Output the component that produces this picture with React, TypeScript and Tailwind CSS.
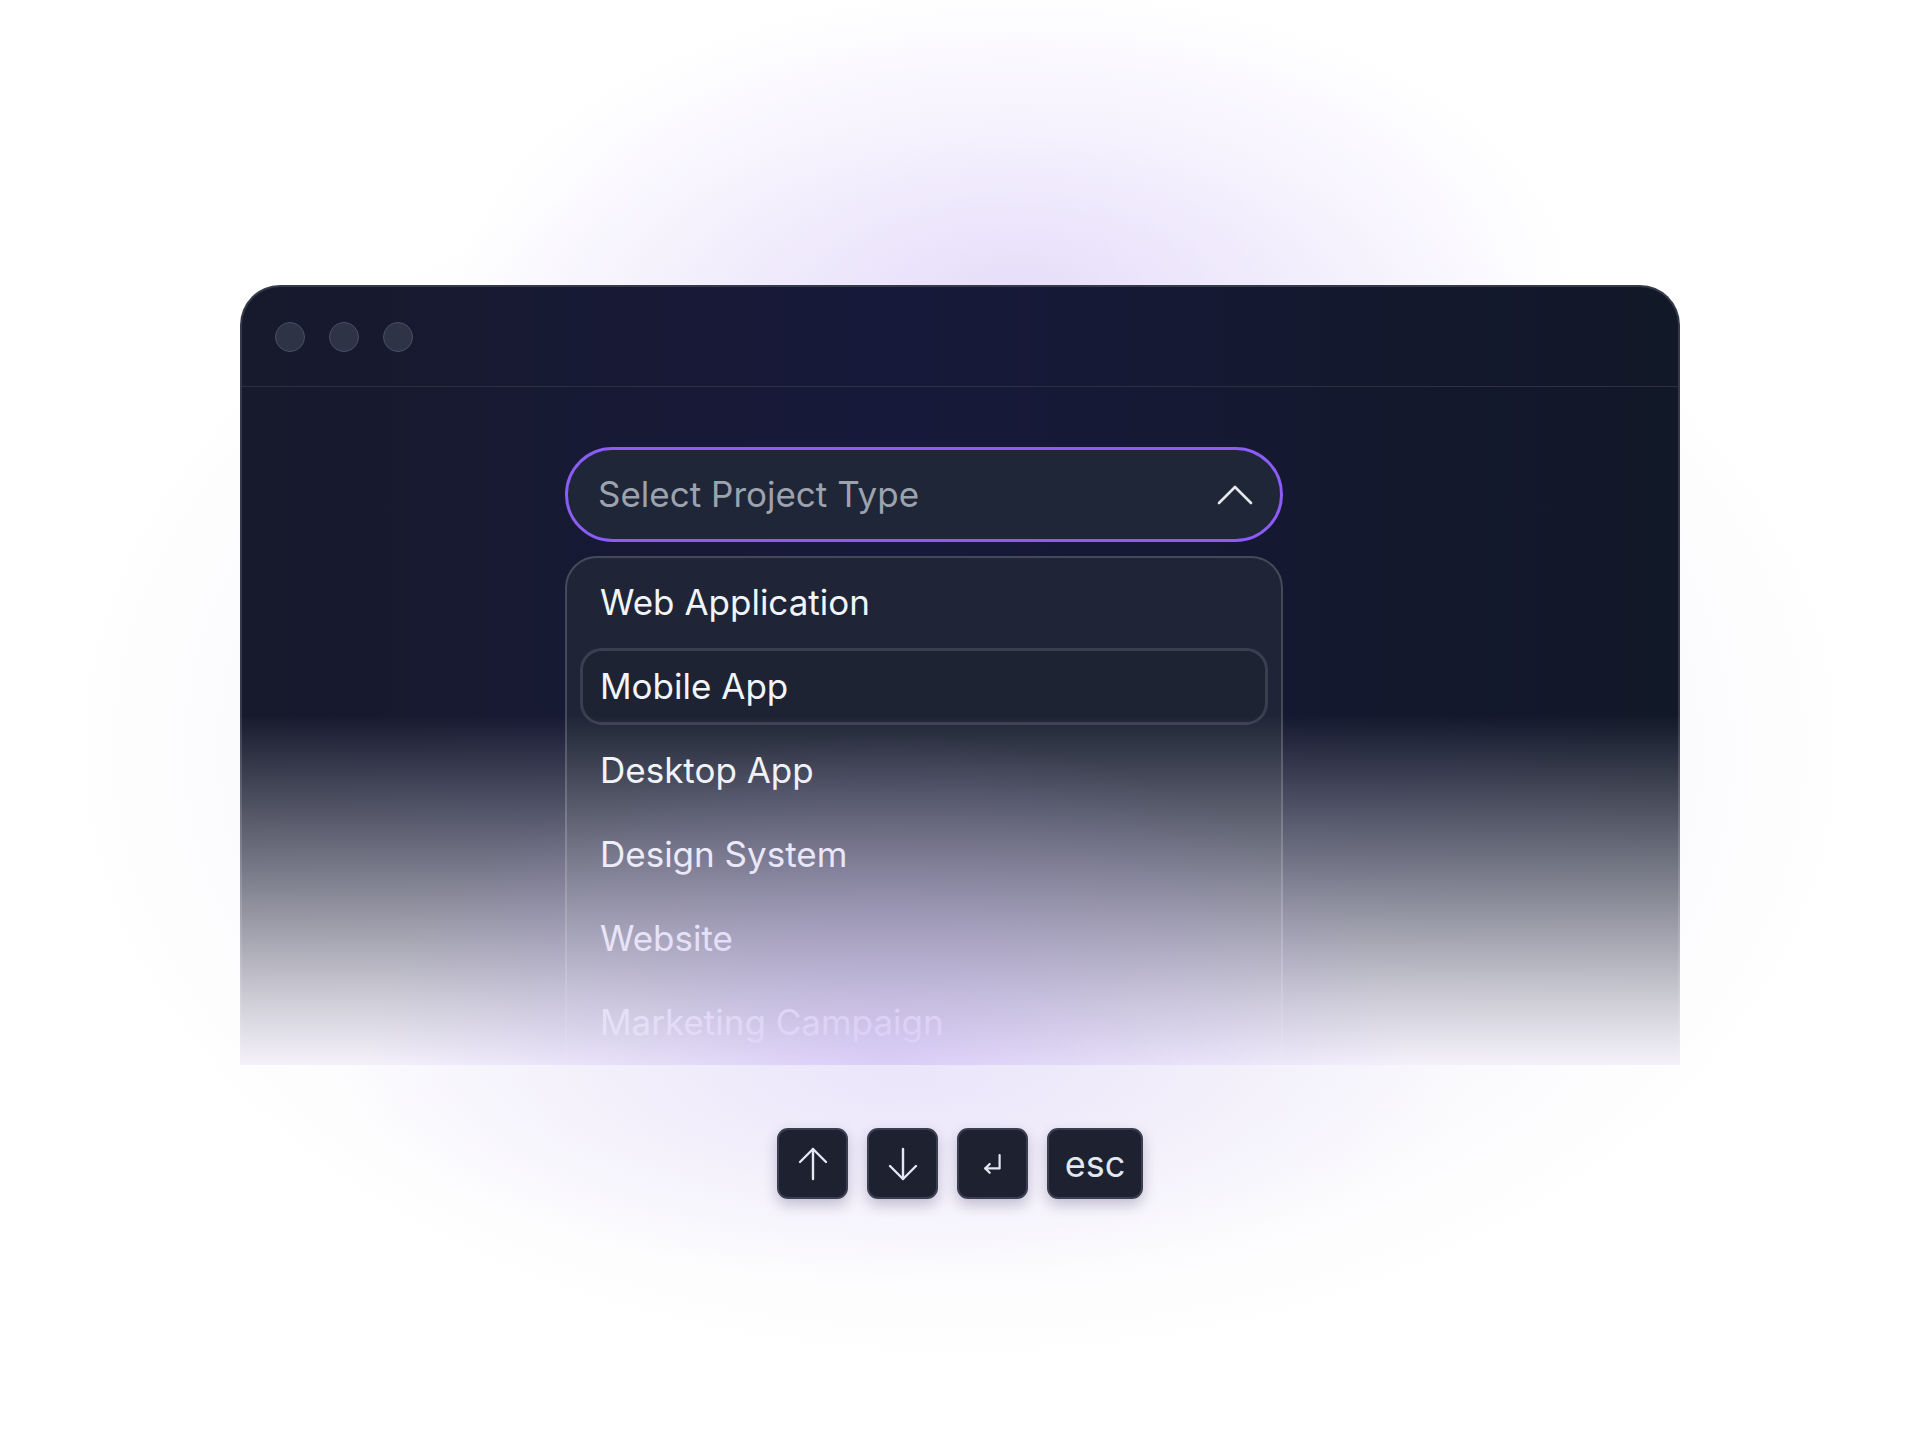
import React from 'react';

const items = ['Web Application', 'Mobile App', 'Desktop App', 'Design System', 'Website', 'Marketing Campaign'];

const ArrowKey = ({ down }: { down?: boolean }) => (
  <svg width="30" height="34" viewBox="0 0 30 34" fill="none" stroke="#e2e8f0" strokeWidth="2.4" strokeLinecap="round" strokeLinejoin="round" className={down ? 'rotate-180' : ''}>
    <path d="M15 2v30" />
    <path d="M2 15 15 2l13 13" />
  </svg>
);

const EnterIcon = () => (
  <svg width="22" height="22" viewBox="0 0 20 20" fill="none" stroke="#e2e8f0" strokeWidth="2" strokeLinecap="round" strokeLinejoin="round">
    <path d="M16 2v12H3" />
    <path d="M7 10l-4 4 4 4" />
  </svg>
);

const Key = ({ children, wide }: { children: React.ReactNode; wide?: boolean }) => (
  <div
    className={`flex h-[71px] items-center justify-center rounded-[11px] border-2 border-[#3b3d50] bg-[#1d2130] shadow-[0_6px_14px_rgba(40,30,80,0.25)] ${
      wide ? 'w-[96px]' : 'w-[71px]'
    }`}
  >
    {children}
  </div>
);

export default function App() {
  return (
    <div className="relative min-h-[1440px] w-full overflow-hidden bg-white font-['Inter','Noto_Sans',sans-serif]">
      {/* background glow */}
      <div className="pointer-events-none absolute inset-0 bg-[radial-gradient(ellipse_900px_620px_at_50%_52%,rgba(140,125,190,0.15),rgba(140,125,190,0.05)_72%,transparent_100%)]" />
      <div className="pointer-events-none absolute inset-0 bg-[radial-gradient(ellipse_560px_300px_at_53%_20%,rgba(180,150,245,0.28),transparent_100%)]" />
      <div className="pointer-events-none absolute inset-0 bg-[radial-gradient(ellipse_560px_200px_at_47%_75%,rgba(190,165,250,0.2),transparent_100%)]" />

      <div className="relative flex flex-col items-center pt-[285px]">
        {/* window */}
        <div className="relative h-[780px] w-[1440px]">
          <div className="h-full w-full overflow-hidden rounded-t-[40px] border-2 border-b-0 border-[#353a4b] bg-[linear-gradient(90deg,#161a2c_0%,#17193a_45%,#111827_100%)]">
            <div className="flex h-[100px] items-center gap-6 border-b border-[#2b3142] pl-[33px]">
              <div className="h-[30px] w-[30px] rounded-full border border-[#4a4f62] bg-[#2e3345]" />
              <div className="h-[30px] w-[30px] rounded-full border border-[#4a4f62] bg-[#2e3345]" />
              <div className="h-[30px] w-[30px] rounded-full border border-[#4a4f62] bg-[#2e3345]" />
            </div>

            <div className="pl-[323px] pt-[60px]">
              <div className="flex h-[95px] w-[718px] items-center justify-between rounded-full border-[3px] border-[#8b5cf6] bg-[#1f2637] pl-[30px] pr-[27px]">
                <span className="text-[35px] text-[#9ca3af]">Select Project Type</span>
                <svg width="36" height="20" viewBox="0 0 36 20" fill="none" stroke="#e5e7eb" strokeWidth="2.6" strokeLinecap="round" strokeLinejoin="round">
                  <path d="M2 18 18 2l16 16" />
                </svg>
              </div>

              <div className="mt-[14px] flex h-[520px] w-[718px] flex-col gap-[7px] overflow-hidden rounded-[32px] border-2 border-[#454a5b] bg-[#1f2536] px-[13px] pt-[6px]">
                {items.map((item) => (
                  <div
                    key={item}
                    className={`flex h-[77px] shrink-0 items-center rounded-[22px] border-[3px] pl-[17px] text-[35px] text-[#f1f5f9] ${
                      item === 'Mobile App' ? 'border-[#3a3f50] bg-[#1e2334]' : 'border-transparent'
                    }`}
                  >
                    {item}
                  </div>
                ))}
              </div>
            </div>
          </div>

          {/* bottom fade, over the window and its border */}
          <div className="pointer-events-none absolute inset-x-0 bottom-0 h-[350px] bg-[linear-gradient(180deg,rgba(244,241,251,0)_0%,rgba(244,241,251,0.45)_45%,rgba(240,238,246,0.85)_82%,#f4f1fb_100%)]" />
          <div className="pointer-events-none absolute inset-x-0 bottom-0 h-[350px] bg-[radial-gradient(ellipse_520px_330px_at_45%_100%,rgba(170,140,240,0.35),transparent_100%)]" />
        </div>

        {/* keys */}
        <div className="mt-[63px] flex gap-[19px]">
          <Key>
            <ArrowKey />
          </Key>
          <Key>
            <ArrowKey down />
          </Key>
          <Key>
            <EnterIcon />
          </Key>
          <Key wide>
            <span className="text-[36px] leading-none text-[#e2e8f0]">esc</span>
          </Key>
        </div>
      </div>
    </div>
  );
}
